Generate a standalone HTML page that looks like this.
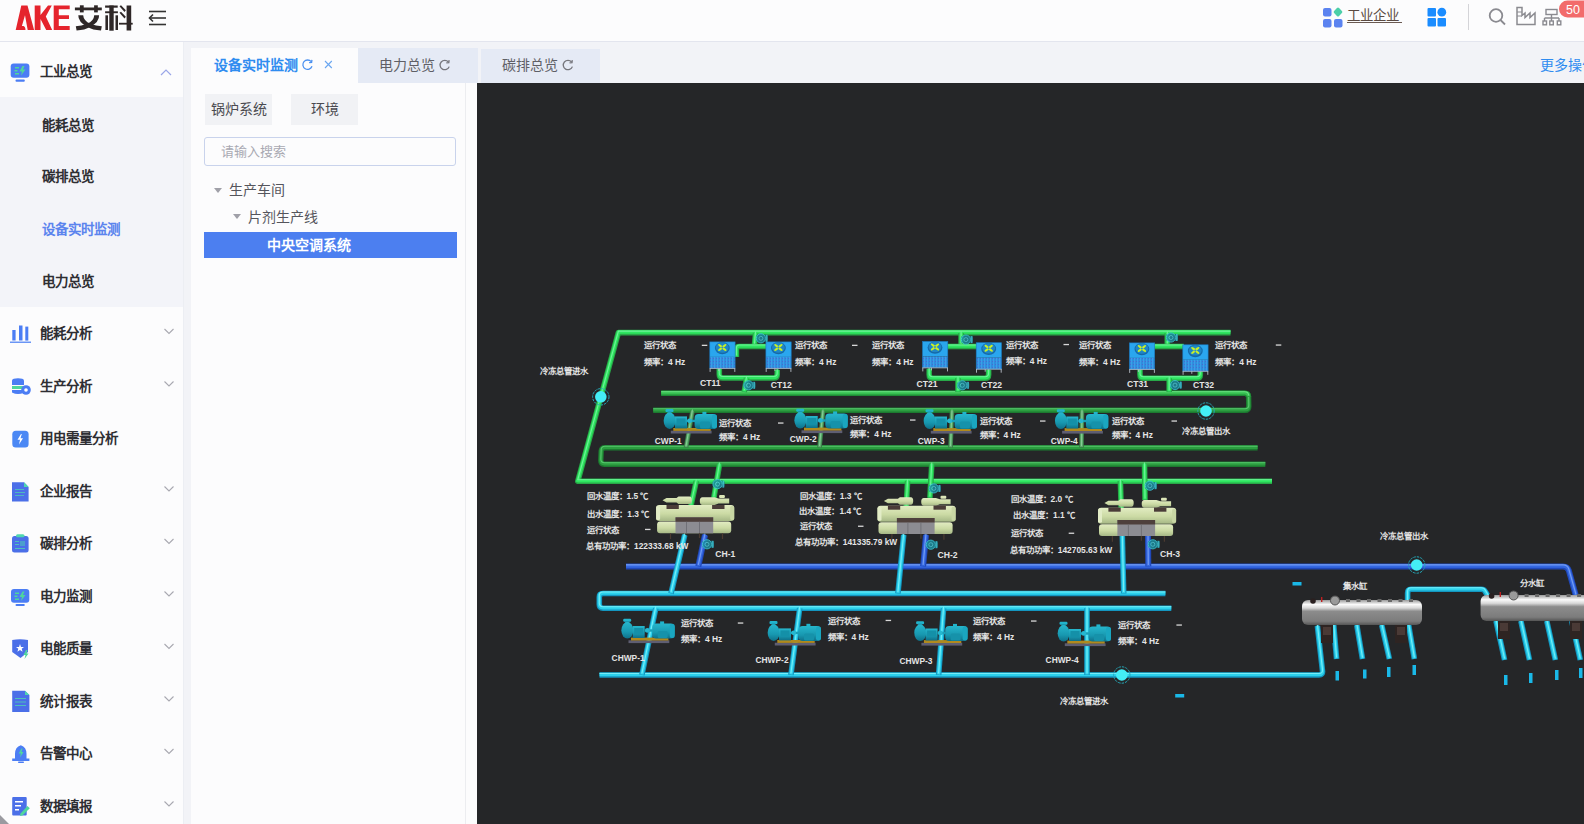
<!DOCTYPE html>
<html lang="zh-CN"><head><meta charset="utf-8">
<style>
*{box-sizing:border-box;margin:0;padding:0}
html,body{width:1584px;height:824px;overflow:hidden;background:#f2f3f7;font-family:"Liberation Sans",sans-serif}
.a{position:absolute}
#hdr{left:0;top:0;width:1584px;height:42px;background:#fcfcfd;border-bottom:1px solid #e3e5ee}
#side{left:0;top:42px;width:183px;height:782px;background:#fcfcfd}
#sub{left:0;top:97px;width:183px;height:210px;background:#f3f4f9}
.mi{position:absolute;left:40px;font-size:13.5px;font-weight:bold;color:#2e2e33;line-height:16px;white-space:nowrap}
.si{position:absolute;left:41.5px;font-size:13.5px;font-weight:bold;color:#2e2e33;line-height:16px;white-space:nowrap}
.chev{position:absolute;left:164px;width:7px;height:7px;border-right:1.2px solid #a8a8b0;border-bottom:1.2px solid #a8a8b0;transform:rotate(45deg)}
.ico{position:absolute;left:9px;width:24px;height:24px}
.tabt{position:absolute;font-size:14px;line-height:16px;color:#5f5f66;white-space:nowrap}
.btn{position:absolute;top:94px;height:31px;background:#f1f2f5;font-size:14px;line-height:31px;color:#4a4a50;text-align:center}
.tr{position:absolute;font-size:14px;line-height:16px;color:#55555c;white-space:nowrap}
.tri{position:absolute;width:0;height:0;border-left:4px solid transparent;border-right:4px solid transparent;border-top:5px solid #a0a0a8}
#canvas{left:477px;top:83px;width:1107px;height:741px;background:#252628}
svg text{font-family:"Liberation Sans",sans-serif}
</style></head><body>
<div id="hdr" class="a"></div>
<!-- logo -->
<svg class="a" style="left:0;top:0" width="180" height="42">
  <g fill="#e5242d">
    <path d="M15.7 30 L21.3 5.5 H27.5 L34.1 30 H27.7 L25 15.3 L21.9 26.1 H23.5 Q25.3 26.5 25.5 30 Z"/>
    <polygon points="34.7,5.5 40.5,5.5 40.5,15 48,5.5 51.8,5.5 45.8,16.6 52.2,30 46.2,30 40.5,19 40.5,30 34.7,30"/>
    <polygon points="53.7,5.5 69.7,5.5 69.7,9.3 58.8,9.3 58.8,15.3 69,15.3 69,19 58.8,19 58.8,26 69.7,26 69.7,30 53.7,30"/>
  </g>
  <g fill="#2e2727">
    <rect x="74.9" y="7.5" width="26.9" height="2.8"/>
    <rect x="79.9" y="5.3" width="3.8" height="7.1"/><rect x="94.1" y="5.3" width="3.7" height="7.1"/>
    <path d="M78.3 15.3 H83.2 Q83.5 21 90.5 23.8 Q96 26 101.8 26.3 L101 30.5 Q92.5 30 87.5 27 Q78 22 78.3 15.3Z"/>
    <path d="M99.1 15.3 H94.2 Q94 21 87 23.8 Q81.5 26 75.8 26.3 L76.6 30.5 Q85 30 90 27 Q99.5 22 99.1 15.3Z"/>
    <rect x="105.1" y="5.5" width="12.6" height="2.2"/>
    <rect x="105.1" y="11.3" width="12.8" height="1.9"/>
    <rect x="109.3" y="5.5" width="4.4" height="25.2"/>
    <rect x="105.4" y="15.3" width="2.6" height="14.7"/>
    <rect x="115.5" y="15.3" width="2.5" height="14.7"/>
    <polygon points="119.5,6.2 121,5.2 125.8,10.3 124.5,12"/>
    <polygon points="119.5,12.8 121,11.8 125.8,16.8 124.5,18.5"/>
    <rect x="119" y="22.8" width="13.7" height="1.8"/>
    <rect x="126.6" y="5.5" width="4.6" height="25"/>
  </g>
  <g stroke="#333" stroke-width="1.6" fill="none">
    <line x1="149" y1="11.5" x2="166" y2="11.5"/><line x1="149.5" y1="18" x2="166" y2="18"/><line x1="149" y1="24.5" x2="166" y2="24.5"/>
    <polyline points="153,14.5 149.5,18 153,21.5"/>
  </g>
</svg>
<!-- header right -->
<svg class="a" style="left:1300px;top:0" width="284" height="42">
  <rect x="23" y="8" width="8.5" height="8.5" rx="2" fill="#5b83f0"/>
  <rect x="23" y="19" width="8.5" height="8.5" rx="2" fill="#5b83f0"/>
  <rect x="34" y="19" width="8.5" height="8.5" rx="2" fill="#5b83f0"/>
  <rect x="34.5" y="8.5" width="7" height="7" rx="1.5" fill="#4ccfa8" transform="rotate(45 38 12)"/>
  <rect x="127.5" y="8" width="8.5" height="8.5" rx="1" fill="#1a8cff"/>
  <rect x="127.5" y="18" width="8.5" height="8.5" rx="1" fill="#1a8cff"/>
  <rect x="137.5" y="18" width="8.5" height="8.5" rx="1" fill="#1a8cff"/>
  <circle cx="141.8" cy="12.2" r="4.4" fill="#1a8cff"/>
  <line x1="168.5" y1="4" x2="168.5" y2="30" stroke="#d4d4d8" stroke-width="1"/>
  <circle cx="196" cy="15.5" r="6.3" fill="none" stroke="#8a8a90" stroke-width="1.8"/>
  <line x1="200.5" y1="20" x2="205" y2="24.5" stroke="#8a8a90" stroke-width="1.8"/>
  <path d="M217 7.5 V24.5 H235 V13 L230 17.5 V13 L225 17.5 V13 L222 15.5 V7.5 Z" fill="none" stroke="#8a8a90" stroke-width="1.5"/>
  <line x1="217" y1="12" x2="222" y2="12" stroke="#8a8a90" stroke-width="1"/>
  <line x1="217" y1="16" x2="222" y2="16" stroke="#8a8a90" stroke-width="1"/>
  <g fill="none" stroke="#8a8a90" stroke-width="1.4">
    <rect x="246" y="9.5" width="11" height="5"/>
    <path d="M251.5 14.5 V18 M244.5 18 H259 M244.5 18 V21 M251.5 18 V21 M259 18 V21"/>
    <rect x="243" y="21" width="3.5" height="3.8"/><rect x="249.8" y="21" width="3.5" height="3.8"/><rect x="257.3" y="21" width="3.5" height="3.8"/>
  </g>
  <rect x="259" y="0.5" width="32" height="17" rx="8.5" fill="#f26b6b"/>
  <text x="266" y="13.5" font-size="12.5" fill="#fff">50</text>
</svg>
<div class="a" style="left:1347px;top:9px;font-size:13.5px;line-height:14px;color:#5a4a42;white-space:nowrap;font-weight:300">工业企业</div><div class="a" style="left:1347px;top:22px;width:55px;height:1px;background:#6a5a52"></div>

<div id="side" class="a"></div>
<div id="sub" class="a"></div>
<div class="a" style="left:183px;top:42px;width:1px;height:782px;background:#eceef3"></div>
<!-- sidebar items -->
<div class="mi" style="top:64px">工业总览</div>
<div class="si" style="top:117.5px">能耗总览</div>
<div class="si" style="top:169px">碳排总览</div>
<div class="si" style="top:222px;color:#5b84ee">设备实时监测</div>
<div class="si" style="top:274px">电力总览</div>
<div class="mi" style="top:326px">能耗分析</div>
<div class="mi" style="top:378.5px">生产分析</div>
<div class="mi" style="top:431px">用电需量分析</div>
<div class="mi" style="top:483.5px">企业报告</div>
<div class="mi" style="top:536px">碳排分析</div>
<div class="mi" style="top:588.5px">电力监测</div>
<div class="mi" style="top:641px">电能质量</div>
<div class="mi" style="top:693.5px">统计报表</div>
<div class="mi" style="top:746px">告警中心</div>
<div class="mi" style="top:798.5px">数据填报</div>
<svg class="a" style="left:0;top:0" width="183" height="824">
  <g fill="none" stroke="#9aa6e8" stroke-width="1.2"><polyline points="161,75 166,70 171,75"/></g>
  <g fill="none" stroke="#a8a8b0" stroke-width="1.1">
    <polyline points="164.5,329 169,333.5 173.5,329"/>
    <polyline points="164.5,381.5 169,386 173.5,381.5"/>
    <polyline points="164.5,486.5 169,491 173.5,486.5"/>
    <polyline points="164.5,539 169,543.5 173.5,539"/>
    <polyline points="164.5,591.5 169,596 173.5,591.5"/>
    <polyline points="164.5,644 169,648.5 173.5,644"/>
    <polyline points="164.5,696.5 169,701 173.5,696.5"/>
    <polyline points="164.5,749 169,753.5 173.5,749"/>
    <polyline points="164.5,801.5 169,806 173.5,801.5"/>
  </g>
  <!-- icon 1 monitor -->
  <rect x="10.7" y="63.5" width="18.7" height="14.3" rx="3" fill="#4b7df4"/>
  <rect x="15.5" y="79.5" width="9.3" height="2.2" rx="1" fill="#4b7df4"/>
  <g fill="#4fd69c"><rect x="15" y="67" width="4" height="1.5"/><rect x="14.5" y="70" width="3" height="1.5"/><rect x="15" y="73" width="4" height="1.5"/>
  <polygon points="22.5,66 19.5,71.5 22,71.5 21,75.5 25.5,69.5 23,69.5 24.5,66"/></g>
  <!-- bar chart -->
  <g fill="#4b7df4"><rect x="12.3" y="330" width="3.3" height="10.5"/><rect x="19" y="325.5" width="3.5" height="15"/><rect x="25.3" y="326.6" width="3" height="14"/><rect x="10" y="341.5" width="21" height="1.5" fill="#6a95f5"/></g>
  <!-- db -->
  <g><ellipse cx="18" cy="380.5" rx="6" ry="2.3" fill="#4b7df4"/><rect x="12" y="381" width="12" height="4" fill="#4b7df4"/><rect x="12" y="386" width="12" height="3" fill="#4fd69c"/><path d="M12 390 H24 V392.5 Q18 395.5 12 392.5Z" fill="#4b7df4"/>
  <circle cx="26" cy="390" r="4.8" fill="#4b7df4"/><circle cx="26" cy="390" r="1.8" fill="#fff"/></g>
  <!-- lightning square -->
  <rect x="12.3" y="430.7" width="16.3" height="16.7" rx="3.5" fill="#4b88f4"/>
  <polygon points="21,434 17.5,439.8 20,439.8 19,444.5 23,438.3 20.5,438.3 21.8,434" fill="#fff"/>
  <!-- doc -->
  <path d="M12 482.3 H24 L28.6 487 V501.5 H12Z" fill="#4b6fe8"/><path d="M24 482.3 L28.6 487 H24Z" fill="#4fd6b0"/>
  <g fill="#4fd6b0" opacity="0.7"><rect x="15" y="489" width="9" height="1"/><rect x="15" y="492" width="10" height="1"/><rect x="15" y="495" width="9" height="1"/></g>
  <!-- clipboard -->
  <rect x="12" y="536" width="16.6" height="16.6" rx="2.5" fill="#4b6fe8"/><rect x="16" y="534.3" width="8.5" height="3" rx="1.5" fill="#4fd6b0"/>
  <g fill="#4fd6b0" opacity="0.8"><rect x="15" y="541" width="4" height="1"/><rect x="15" y="544" width="4" height="1"/><rect x="20" y="541" width="5" height="5" opacity="0.6"/><rect x="15" y="548" width="10" height="1"/></g>
  <!-- monitor 2 -->
  <rect x="11" y="589" width="18.3" height="13.8" rx="3" fill="#4b7df4"/>
  <rect x="15.5" y="604" width="9.3" height="2" rx="1" fill="#4b7df4"/>
  <g fill="#4fd69c"><rect x="15" y="592.5" width="4" height="1.5"/><rect x="14.5" y="595.5" width="3" height="1.5"/><rect x="15" y="598.5" width="4" height="1.5"/>
  <polygon points="22.5,591.5 19.5,597 22,597 21,601 25.5,595 23,595 24.5,591.5"/></g>
  <!-- shield -->
  <path d="M12.2 640 Q20 638.5 28 640 V652 L20.5 658 L12.2 652Z" fill="#4b6fe8"/>
  <polygon points="20,644 21,647 24,647 21.7,648.8 22.6,651.8 20,650 17.4,651.8 18.3,648.8 16,647 19,647" fill="#fff"/>
  <polygon points="26,650 23.5,655 25.5,655 24.5,659 28.5,653.5 26.5,653.5 27.5,650" fill="#4fd69c"/>
  <!-- doc 2 -->
  <path d="M12.2 690.7 H25 L29.4 695 V711.9 H12.2Z" fill="#4b6fe8"/><path d="M25 690.7 L29.4 695 H25Z" fill="#4fd6b0"/>
  <g fill="#4fd6b0" opacity="0.8"><rect x="15" y="698" width="11" height="1"/><rect x="15" y="701.5" width="11" height="1"/><rect x="15" y="705" width="11" height="1"/></g>
  <!-- bell -->
  <path d="M20.8 745.3 Q26.5 747 26.5 754 V758.5 H29.4 V761 H12.2 V758.5 H15 V754 Q15 747 20.8 745.3Z" fill="#4b7df4"/>
  <rect x="18" y="761.5" width="6" height="1.5" rx="0.7" fill="#4b7df4"/>
  <polygon points="21.5,748.5 18.7,753.5 20.8,753.5 20,757.5 23.5,752 21.5,752 22.5,748.5" fill="#4fd69c"/>
  <polygon points="0,815 0,824 9,824" fill="#9a9aa0"/>
  <!-- form -->
  <rect x="12.2" y="797" width="14.5" height="18.5" rx="1" fill="#4b6fe8"/>
  <g fill="#fff"><rect x="15" y="801" width="8" height="1.5"/><rect x="15" y="805" width="6" height="1.5"/><rect x="15" y="809" width="4" height="1.5"/></g>
  <polygon points="27.5,806 29.8,808.3 22.5,815.5 20,816 20.5,813.5" fill="#4fd69c"/>
</svg>
<!-- tabs -->
<div class="a" style="left:191px;top:47.5px;width:167px;height:36px;background:#fcfcfd"></div>
<div class="a" style="left:358px;top:48px;width:119.5px;height:34.5px;background:#e5eaf5"></div>
<div class="a" style="left:481px;top:48.5px;width:119px;height:34px;background:#e5eaf5"></div>
<div class="tabt" style="left:214px;top:57px;color:#2f8cf0;font-weight:bold">设备实时监测</div>
<div class="tabt" style="left:379px;top:57px">电力总览</div>
<div class="tabt" style="left:502px;top:57px">碳排总览</div>
<svg class="a" style="left:0;top:40px" width="620" height="44"><g fill="none" stroke-width="1.3"><path d="M311.20 21.70 A4.7 4.7 0 1 0 312.00 26.30" stroke="#4a90f0"/><polyline points="311.90,19.80 311.60,22.30 309.10,22.60" stroke="#4a90f0"/><path d="M448.40 22.00 A4.7 4.7 0 1 0 449.20 26.60" stroke="#76767c"/><polyline points="449.10,20.10 448.80,22.60 446.30,22.90" stroke="#76767c"/><path d="M571.60 22.00 A4.7 4.7 0 1 0 572.40 26.60" stroke="#76767c"/><polyline points="572.30,20.10 572.00,22.60 569.50,22.90" stroke="#76767c"/><path d="M325 21 L331.8 28 M331.8 21 L325 28" stroke="#6aa6f0" stroke-width="1.1"/></g></svg>
<div class="a" style="left:1540px;top:57px;font-size:14px;line-height:16px;color:#2f8cf0;white-space:nowrap">更多操作</div>
<!-- panel -->
<div class="a" style="left:191px;top:83px;width:286px;height:741px;background:#fcfcfd"></div>
<div class="a" style="left:465px;top:83px;width:1px;height:741px;background:#ecedf0"></div>
<div class="btn" style="left:205px;width:67px">锅炉系统</div>
<div class="btn" style="left:291px;width:67px">环境</div>
<div class="a" style="left:204px;top:137px;width:252px;height:29px;border:1px solid #c9d3ec;border-radius:3px;background:#fcfcfd"></div>
<div class="tr" style="left:221px;top:143.5px;color:#a9a9b2;font-size:13px">请输入搜索</div>
<div class="tri" style="left:214px;top:188px"></div>
<div class="tr" style="left:229px;top:182px">生产车间</div>
<div class="tri" style="left:233px;top:214px"></div>
<div class="tr" style="left:248px;top:208.5px">片剂生产线</div>
<div class="a" style="left:204px;top:232px;width:253px;height:26px;background:#4c7ff0"></div>
<div class="tr" style="left:267px;top:237px;color:#fff;font-weight:bold">中央空调系统</div>
<div id="canvas" class="a"></div>
<svg class="a" style="left:0;top:0" width="1584" height="824" viewBox="0 0 1584 824">
<defs>
<linearGradient id="ctTop" x1="0" y1="0" x2="0" y2="1"><stop offset="0" stop-color="#3cb4f4"/><stop offset="1" stop-color="#2892e0"/></linearGradient>
<pattern id="slat" width="3" height="3" patternUnits="userSpaceOnUse"><rect width="3" height="3" fill="#2e8ede"/><rect width="1" height="3" fill="#3c9ee8"/><rect x="2" y="1" width="1" height="1" fill="#4a6ad0"/></pattern>
<linearGradient id="cyl" x1="0" y1="0" x2="0" y2="1"><stop offset="0" stop-color="#9a9a9a"/><stop offset="0.18" stop-color="#fafafa"/><stop offset="0.32" stop-color="#d8d8d8"/><stop offset="0.45" stop-color="#8c8c8c"/><stop offset="0.85" stop-color="#7c7c7c"/><stop offset="1" stop-color="#555555"/></linearGradient>
<linearGradient id="chl" x1="0" y1="0" x2="0" y2="1"><stop offset="0" stop-color="#e2ecc2"/><stop offset="0.55" stop-color="#cbdaa4"/><stop offset="1" stop-color="#a6b886"/></linearGradient>
<linearGradient id="pmp" x1="0" y1="0" x2="0" y2="1"><stop offset="0" stop-color="#26b6cc"/><stop offset="0.6" stop-color="#1898b0"/><stop offset="1" stop-color="#0e7088"/></linearGradient>
</defs>
<path d="M1230.5 332.6 H618.4 L577.8 481.2 H1272" fill="none" stroke="#28a848" stroke-width="5.6" stroke-linejoin="round" stroke-linecap="butt"/>
<path d="M1230.5 332.6 H618.4 L577.8 481.2 H1272" fill="none" stroke="#2ee660" stroke-width="3.47" stroke-linejoin="round" stroke-linecap="butt" transform="translate(0,-0.5)"/>
<path d="M1230.5 332.6 H618.4 L577.8 481.2 H1272" fill="none" stroke="#80f4a8" stroke-width="1.12" stroke-linejoin="round" stroke-linecap="butt" transform="translate(0,-1.5)" opacity="0.8"/>
<path d="M661.2 393.2 H1244.5 Q1248.5 393.2 1248.6 397 L1248.8 406.5 Q1248.8 410.3 1245 410.3 H653.2" fill="none" stroke="#1c7a30" stroke-width="5.4" stroke-linejoin="round" stroke-linecap="butt"/>
<path d="M661.2 393.2 H1244.5 Q1248.5 393.2 1248.6 397 L1248.8 406.5 Q1248.8 410.3 1245 410.3 H653.2" fill="none" stroke="#2c9e40" stroke-width="3.35" stroke-linejoin="round" stroke-linecap="butt" transform="translate(0,-0.5)"/>
<path d="M661.2 393.2 H1244.5 Q1248.5 393.2 1248.6 397 L1248.8 406.5 Q1248.8 410.3 1245 410.3 H653.2" fill="none" stroke="#60d078" stroke-width="1.08" stroke-linejoin="round" stroke-linecap="butt" transform="translate(0,-1.5)" opacity="0.8"/>
<path d="M661.2 393.2 H1244.5 Q1248.5 393.2 1248.6 397" fill="none" stroke="#1f8a36" stroke-width="5.4" stroke-linejoin="round" stroke-linecap="butt"/>
<path d="M661.2 393.2 H1244.5 Q1248.5 393.2 1248.6 397" fill="none" stroke="#36c050" stroke-width="3.35" stroke-linejoin="round" stroke-linecap="butt" transform="translate(0,-0.5)"/>
<path d="M661.2 393.2 H1244.5 Q1248.5 393.2 1248.6 397" fill="none" stroke="#78e890" stroke-width="1.08" stroke-linejoin="round" stroke-linecap="butt" transform="translate(0,-1.5)" opacity="0.8"/>
<path d="M1257.6 447.8 H605 Q601.5 447.8 601.2 451 L600.8 460.5 Q600.8 464.2 604.5 464.2 H1265.3" fill="none" stroke="#1c7a30" stroke-width="5.4" stroke-linejoin="round" stroke-linecap="butt"/>
<path d="M1257.6 447.8 H605 Q601.5 447.8 601.2 451 L600.8 460.5 Q600.8 464.2 604.5 464.2 H1265.3" fill="none" stroke="#2c9e40" stroke-width="3.35" stroke-linejoin="round" stroke-linecap="butt" transform="translate(0,-0.5)"/>
<path d="M1257.6 447.8 H605 Q601.5 447.8 601.2 451 L600.8 460.5 Q600.8 464.2 604.5 464.2 H1265.3" fill="none" stroke="#60d078" stroke-width="1.08" stroke-linejoin="round" stroke-linecap="butt" transform="translate(0,-1.5)" opacity="0.8"/>
<path d="M754.3 347 L755.6 333" fill="none" stroke="#28a848" stroke-width="5.6" stroke-linejoin="round" stroke-linecap="butt"/>
<path d="M754.3 347 L755.6 333" fill="none" stroke="#2ee660" stroke-width="3.47" stroke-linejoin="round" stroke-linecap="butt" transform="translate(0,-0.5)"/>
<path d="M754.3 347 L755.6 333" fill="none" stroke="#80f4a8" stroke-width="1.12" stroke-linejoin="round" stroke-linecap="butt" transform="translate(0,-1.5)" opacity="0.8"/>
<path d="M736.4 357 V349.5 Q736.4 346.5 739.4 346.5 H766.9" fill="none" stroke="#28a848" stroke-width="5.6" stroke-linejoin="round" stroke-linecap="butt"/>
<path d="M736.4 357 V349.5 Q736.4 346.5 739.4 346.5 H766.9" fill="none" stroke="#2ee660" stroke-width="3.47" stroke-linejoin="round" stroke-linecap="butt" transform="translate(0,-0.5)"/>
<path d="M736.4 357 V349.5 Q736.4 346.5 739.4 346.5 H766.9" fill="none" stroke="#80f4a8" stroke-width="1.12" stroke-linejoin="round" stroke-linecap="butt" transform="translate(0,-1.5)" opacity="0.8"/>
<path d="M719.3 369 V374.5 Q719.3 378 722.8 378 H773.7 Q777.2 378 777.2 374.5 V370" fill="none" stroke="#28a848" stroke-width="5.6" stroke-linejoin="round" stroke-linecap="butt"/>
<path d="M719.3 369 V374.5 Q719.3 378 722.8 378 H773.7 Q777.2 378 777.2 374.5 V370" fill="none" stroke="#2ee660" stroke-width="3.47" stroke-linejoin="round" stroke-linecap="butt" transform="translate(0,-0.5)"/>
<path d="M719.3 369 V374.5 Q719.3 378 722.8 378 H773.7 Q777.2 378 777.2 374.5 V370" fill="none" stroke="#80f4a8" stroke-width="1.12" stroke-linejoin="round" stroke-linecap="butt" transform="translate(0,-1.5)" opacity="0.8"/>
<path d="M746.6 378 L744.2 392" fill="none" stroke="#28a848" stroke-width="5.6" stroke-linejoin="round" stroke-linecap="butt"/>
<path d="M746.6 378 L744.2 392" fill="none" stroke="#2ee660" stroke-width="3.47" stroke-linejoin="round" stroke-linecap="butt" transform="translate(0,-0.5)"/>
<path d="M746.6 378 L744.2 392" fill="none" stroke="#80f4a8" stroke-width="1.12" stroke-linejoin="round" stroke-linecap="butt" transform="translate(0,-1.5)" opacity="0.8"/>
<path d="M961.1 347 L961.1 333" fill="none" stroke="#28a848" stroke-width="5.6" stroke-linejoin="round" stroke-linecap="butt"/>
<path d="M961.1 347 L961.1 333" fill="none" stroke="#2ee660" stroke-width="3.47" stroke-linejoin="round" stroke-linecap="butt" transform="translate(0,-0.5)"/>
<path d="M961.1 347 L961.1 333" fill="none" stroke="#80f4a8" stroke-width="1.12" stroke-linejoin="round" stroke-linecap="butt" transform="translate(0,-1.5)" opacity="0.8"/>
<path d="M946.5 346.5 H977.2" fill="none" stroke="#28a848" stroke-width="5.6" stroke-linejoin="round" stroke-linecap="butt"/>
<path d="M946.5 346.5 H977.2" fill="none" stroke="#2ee660" stroke-width="3.47" stroke-linejoin="round" stroke-linecap="butt" transform="translate(0,-0.5)"/>
<path d="M946.5 346.5 H977.2" fill="none" stroke="#80f4a8" stroke-width="1.12" stroke-linejoin="round" stroke-linecap="butt" transform="translate(0,-1.5)" opacity="0.8"/>
<path d="M929.2 369 V374.7 Q929.2 378.2 932.7 378.2 H985.1 Q988.6 378.2 988.6 374.7 V370" fill="none" stroke="#28a848" stroke-width="5.6" stroke-linejoin="round" stroke-linecap="butt"/>
<path d="M929.2 369 V374.7 Q929.2 378.2 932.7 378.2 H985.1 Q988.6 378.2 988.6 374.7 V370" fill="none" stroke="#2ee660" stroke-width="3.47" stroke-linejoin="round" stroke-linecap="butt" transform="translate(0,-0.5)"/>
<path d="M929.2 369 V374.7 Q929.2 378.2 932.7 378.2 H985.1 Q988.6 378.2 988.6 374.7 V370" fill="none" stroke="#80f4a8" stroke-width="1.12" stroke-linejoin="round" stroke-linecap="butt" transform="translate(0,-1.5)" opacity="0.8"/>
<path d="M958 378.2 L958 392" fill="none" stroke="#28a848" stroke-width="5.6" stroke-linejoin="round" stroke-linecap="butt"/>
<path d="M958 378.2 L958 392" fill="none" stroke="#2ee660" stroke-width="3.47" stroke-linejoin="round" stroke-linecap="butt" transform="translate(0,-0.5)"/>
<path d="M958 378.2 L958 392" fill="none" stroke="#80f4a8" stroke-width="1.12" stroke-linejoin="round" stroke-linecap="butt" transform="translate(0,-1.5)" opacity="0.8"/>
<path d="M1167.3 347 L1167.3 333" fill="none" stroke="#28a848" stroke-width="5.6" stroke-linejoin="round" stroke-linecap="butt"/>
<path d="M1167.3 347 L1167.3 333" fill="none" stroke="#2ee660" stroke-width="3.47" stroke-linejoin="round" stroke-linecap="butt" transform="translate(0,-0.5)"/>
<path d="M1167.3 347 L1167.3 333" fill="none" stroke="#80f4a8" stroke-width="1.12" stroke-linejoin="round" stroke-linecap="butt" transform="translate(0,-1.5)" opacity="0.8"/>
<path d="M1153.4 346.5 H1183.8" fill="none" stroke="#28a848" stroke-width="5.6" stroke-linejoin="round" stroke-linecap="butt"/>
<path d="M1153.4 346.5 H1183.8" fill="none" stroke="#2ee660" stroke-width="3.47" stroke-linejoin="round" stroke-linecap="butt" transform="translate(0,-0.5)"/>
<path d="M1153.4 346.5 H1183.8" fill="none" stroke="#80f4a8" stroke-width="1.12" stroke-linejoin="round" stroke-linecap="butt" transform="translate(0,-1.5)" opacity="0.8"/>
<path d="M1140 369 V374.8 Q1140 378.3 1143.5 378.3 H1196.8 Q1200.3 378.3 1200.3 374.8 V370" fill="none" stroke="#28a848" stroke-width="5.6" stroke-linejoin="round" stroke-linecap="butt"/>
<path d="M1140 369 V374.8 Q1140 378.3 1143.5 378.3 H1196.8 Q1200.3 378.3 1200.3 374.8 V370" fill="none" stroke="#2ee660" stroke-width="3.47" stroke-linejoin="round" stroke-linecap="butt" transform="translate(0,-0.5)"/>
<path d="M1140 369 V374.8 Q1140 378.3 1143.5 378.3 H1196.8 Q1200.3 378.3 1200.3 374.8 V370" fill="none" stroke="#80f4a8" stroke-width="1.12" stroke-linejoin="round" stroke-linecap="butt" transform="translate(0,-1.5)" opacity="0.8"/>
<path d="M1169.2 378.3 L1169.2 392" fill="none" stroke="#28a848" stroke-width="5.6" stroke-linejoin="round" stroke-linecap="butt"/>
<path d="M1169.2 378.3 L1169.2 392" fill="none" stroke="#2ee660" stroke-width="3.47" stroke-linejoin="round" stroke-linecap="butt" transform="translate(0,-0.5)"/>
<path d="M1169.2 378.3 L1169.2 392" fill="none" stroke="#80f4a8" stroke-width="1.12" stroke-linejoin="round" stroke-linecap="butt" transform="translate(0,-1.5)" opacity="0.8"/>
<path d="M692.5 411 L686 447.6" fill="none" stroke="#3a7a48" stroke-width="4.6" stroke-linejoin="round" stroke-linecap="butt"/>
<path d="M692.5 411 L686 447.6" fill="none" stroke="#5aae6a" stroke-width="2.85" stroke-linejoin="round" stroke-linecap="butt" transform="translate(0,-0.5)"/>
<path d="M692.5 411 L686 447.6" fill="none" stroke="#98d8a8" stroke-width="0.92" stroke-linejoin="round" stroke-linecap="butt" transform="translate(0,-1.5)" opacity="0.8"/>
<path d="M823 411 L819.5 447.6" fill="none" stroke="#3a7a48" stroke-width="4.6" stroke-linejoin="round" stroke-linecap="butt"/>
<path d="M823 411 L819.5 447.6" fill="none" stroke="#5aae6a" stroke-width="2.85" stroke-linejoin="round" stroke-linecap="butt" transform="translate(0,-0.5)"/>
<path d="M823 411 L819.5 447.6" fill="none" stroke="#98d8a8" stroke-width="0.92" stroke-linejoin="round" stroke-linecap="butt" transform="translate(0,-1.5)" opacity="0.8"/>
<path d="M952 411 L950.5 447.6" fill="none" stroke="#3a7a48" stroke-width="4.6" stroke-linejoin="round" stroke-linecap="butt"/>
<path d="M952 411 L950.5 447.6" fill="none" stroke="#5aae6a" stroke-width="2.85" stroke-linejoin="round" stroke-linecap="butt" transform="translate(0,-0.5)"/>
<path d="M952 411 L950.5 447.6" fill="none" stroke="#98d8a8" stroke-width="0.92" stroke-linejoin="round" stroke-linecap="butt" transform="translate(0,-1.5)" opacity="0.8"/>
<path d="M1082 411 L1081.5 447.6" fill="none" stroke="#3a7a48" stroke-width="4.6" stroke-linejoin="round" stroke-linecap="butt"/>
<path d="M1082 411 L1081.5 447.6" fill="none" stroke="#5aae6a" stroke-width="2.85" stroke-linejoin="round" stroke-linecap="butt" transform="translate(0,-0.5)"/>
<path d="M1082 411 L1081.5 447.6" fill="none" stroke="#98d8a8" stroke-width="0.92" stroke-linejoin="round" stroke-linecap="butt" transform="translate(0,-1.5)" opacity="0.8"/>
<path d="M719.6 464 L713.8 498" fill="none" stroke="#28a848" stroke-width="5.6" stroke-linejoin="round" stroke-linecap="butt"/>
<path d="M719.6 464 L713.8 498" fill="none" stroke="#2ee660" stroke-width="3.47" stroke-linejoin="round" stroke-linecap="butt" transform="translate(0,-0.5)"/>
<path d="M719.6 464 L713.8 498" fill="none" stroke="#80f4a8" stroke-width="1.12" stroke-linejoin="round" stroke-linecap="butt" transform="translate(0,-1.5)" opacity="0.8"/>
<path d="M696.3 481 L690.9 506" fill="none" stroke="#28a848" stroke-width="5.6" stroke-linejoin="round" stroke-linecap="butt"/>
<path d="M696.3 481 L690.9 506" fill="none" stroke="#2ee660" stroke-width="3.47" stroke-linejoin="round" stroke-linecap="butt" transform="translate(0,-0.5)"/>
<path d="M696.3 481 L690.9 506" fill="none" stroke="#80f4a8" stroke-width="1.12" stroke-linejoin="round" stroke-linecap="butt" transform="translate(0,-1.5)" opacity="0.8"/>
<path d="M931.8 464 L929.9 498" fill="none" stroke="#28a848" stroke-width="5.6" stroke-linejoin="round" stroke-linecap="butt"/>
<path d="M931.8 464 L929.9 498" fill="none" stroke="#2ee660" stroke-width="3.47" stroke-linejoin="round" stroke-linecap="butt" transform="translate(0,-0.5)"/>
<path d="M931.8 464 L929.9 498" fill="none" stroke="#80f4a8" stroke-width="1.12" stroke-linejoin="round" stroke-linecap="butt" transform="translate(0,-1.5)" opacity="0.8"/>
<path d="M907.6 481 L906.2 507" fill="none" stroke="#28a848" stroke-width="5.6" stroke-linejoin="round" stroke-linecap="butt"/>
<path d="M907.6 481 L906.2 507" fill="none" stroke="#2ee660" stroke-width="3.47" stroke-linejoin="round" stroke-linecap="butt" transform="translate(0,-0.5)"/>
<path d="M907.6 481 L906.2 507" fill="none" stroke="#80f4a8" stroke-width="1.12" stroke-linejoin="round" stroke-linecap="butt" transform="translate(0,-1.5)" opacity="0.8"/>
<path d="M1144.5 464 L1145 500" fill="none" stroke="#28a848" stroke-width="5.6" stroke-linejoin="round" stroke-linecap="butt"/>
<path d="M1144.5 464 L1145 500" fill="none" stroke="#2ee660" stroke-width="3.47" stroke-linejoin="round" stroke-linecap="butt" transform="translate(0,-0.5)"/>
<path d="M1144.5 464 L1145 500" fill="none" stroke="#80f4a8" stroke-width="1.12" stroke-linejoin="round" stroke-linecap="butt" transform="translate(0,-1.5)" opacity="0.8"/>
<path d="M1120.4 481 L1121.2 509" fill="none" stroke="#28a848" stroke-width="5.6" stroke-linejoin="round" stroke-linecap="butt"/>
<path d="M1120.4 481 L1121.2 509" fill="none" stroke="#2ee660" stroke-width="3.47" stroke-linejoin="round" stroke-linecap="butt" transform="translate(0,-0.5)"/>
<path d="M1120.4 481 L1121.2 509" fill="none" stroke="#80f4a8" stroke-width="1.12" stroke-linejoin="round" stroke-linecap="butt" transform="translate(0,-1.5)" opacity="0.8"/>
<path d="M626 566.4 H1563 Q1567.5 566.4 1568.8 570.5 L1576 596" fill="none" stroke="#2048b8" stroke-width="6.0" stroke-linejoin="round" stroke-linecap="butt"/>
<path d="M626 566.4 H1563 Q1567.5 566.4 1568.8 570.5 L1576 596" fill="none" stroke="#3468e2" stroke-width="3.72" stroke-linejoin="round" stroke-linecap="butt" transform="translate(0,-0.5)"/>
<path d="M626 566.4 H1563 Q1567.5 566.4 1568.8 570.5 L1576 596" fill="none" stroke="#82a8f6" stroke-width="1.20" stroke-linejoin="round" stroke-linecap="butt" transform="translate(0,-1.5)" opacity="0.8"/>
<path d="M1165.4 593.5 H603 Q599.3 593.5 599.3 597 V604.5 Q599.3 608.2 603 608.2 H1171.3" fill="none" stroke="#1496c0" stroke-width="5.6" stroke-linejoin="round" stroke-linecap="butt"/>
<path d="M1165.4 593.5 H603 Q599.3 593.5 599.3 597 V604.5 Q599.3 608.2 603 608.2 H1171.3" fill="none" stroke="#2cd2ec" stroke-width="3.47" stroke-linejoin="round" stroke-linecap="butt" transform="translate(0,-0.5)"/>
<path d="M1165.4 593.5 H603 Q599.3 593.5 599.3 597 V604.5 Q599.3 608.2 603 608.2 H1171.3" fill="none" stroke="#8af2fa" stroke-width="1.12" stroke-linejoin="round" stroke-linecap="butt" transform="translate(0,-1.5)" opacity="0.8"/>
<path d="M599.5 675 H1319 Q1323 675 1322.5 671 L1317.4 626" fill="none" stroke="#1496c0" stroke-width="5.6" stroke-linejoin="round" stroke-linecap="butt"/>
<path d="M599.5 675 H1319 Q1323 675 1322.5 671 L1317.4 626" fill="none" stroke="#2cd2ec" stroke-width="3.47" stroke-linejoin="round" stroke-linecap="butt" transform="translate(0,-0.5)"/>
<path d="M599.5 675 H1319 Q1323 675 1322.5 671 L1317.4 626" fill="none" stroke="#8af2fa" stroke-width="1.12" stroke-linejoin="round" stroke-linecap="butt" transform="translate(0,-1.5)" opacity="0.8"/>
<path d="M684.7 535 L671 593.5" fill="none" stroke="#1496c0" stroke-width="5.6" stroke-linejoin="round" stroke-linecap="butt"/>
<path d="M684.7 535 L671 593.5" fill="none" stroke="#2cd2ec" stroke-width="3.47" stroke-linejoin="round" stroke-linecap="butt" transform="translate(0,-0.5)"/>
<path d="M684.7 535 L671 593.5" fill="none" stroke="#8af2fa" stroke-width="1.12" stroke-linejoin="round" stroke-linecap="butt" transform="translate(0,-1.5)" opacity="0.8"/>
<path d="M705 535 L698.3 566.4" fill="none" stroke="#2048b8" stroke-width="6.0" stroke-linejoin="round" stroke-linecap="butt"/>
<path d="M705 535 L698.3 566.4" fill="none" stroke="#3468e2" stroke-width="3.72" stroke-linejoin="round" stroke-linecap="butt" transform="translate(0,-0.5)"/>
<path d="M705 535 L698.3 566.4" fill="none" stroke="#82a8f6" stroke-width="1.20" stroke-linejoin="round" stroke-linecap="butt" transform="translate(0,-1.5)" opacity="0.8"/>
<path d="M903.7 535 L897.9 593.5" fill="none" stroke="#1496c0" stroke-width="5.6" stroke-linejoin="round" stroke-linecap="butt"/>
<path d="M903.7 535 L897.9 593.5" fill="none" stroke="#2cd2ec" stroke-width="3.47" stroke-linejoin="round" stroke-linecap="butt" transform="translate(0,-0.5)"/>
<path d="M903.7 535 L897.9 593.5" fill="none" stroke="#8af2fa" stroke-width="1.12" stroke-linejoin="round" stroke-linecap="butt" transform="translate(0,-1.5)" opacity="0.8"/>
<path d="M926 535 L923.1 566.4" fill="none" stroke="#2048b8" stroke-width="6.0" stroke-linejoin="round" stroke-linecap="butt"/>
<path d="M926 535 L923.1 566.4" fill="none" stroke="#3468e2" stroke-width="3.72" stroke-linejoin="round" stroke-linecap="butt" transform="translate(0,-0.5)"/>
<path d="M926 535 L923.1 566.4" fill="none" stroke="#82a8f6" stroke-width="1.20" stroke-linejoin="round" stroke-linecap="butt" transform="translate(0,-1.5)" opacity="0.8"/>
<path d="M1122.3 535 L1123.7 593.5" fill="none" stroke="#1496c0" stroke-width="5.6" stroke-linejoin="round" stroke-linecap="butt"/>
<path d="M1122.3 535 L1123.7 593.5" fill="none" stroke="#2cd2ec" stroke-width="3.47" stroke-linejoin="round" stroke-linecap="butt" transform="translate(0,-0.5)"/>
<path d="M1122.3 535 L1123.7 593.5" fill="none" stroke="#8af2fa" stroke-width="1.12" stroke-linejoin="round" stroke-linecap="butt" transform="translate(0,-1.5)" opacity="0.8"/>
<path d="M1148 535 L1148.3 566.4" fill="none" stroke="#2048b8" stroke-width="6.0" stroke-linejoin="round" stroke-linecap="butt"/>
<path d="M1148 535 L1148.3 566.4" fill="none" stroke="#3468e2" stroke-width="3.72" stroke-linejoin="round" stroke-linecap="butt" transform="translate(0,-0.5)"/>
<path d="M1148 535 L1148.3 566.4" fill="none" stroke="#82a8f6" stroke-width="1.20" stroke-linejoin="round" stroke-linecap="butt" transform="translate(0,-1.5)" opacity="0.8"/>
<path d="M655.8 608.2 L641.9 675" fill="none" stroke="#1496c0" stroke-width="5.6" stroke-linejoin="round" stroke-linecap="butt"/>
<path d="M655.8 608.2 L641.9 675" fill="none" stroke="#2cd2ec" stroke-width="3.47" stroke-linejoin="round" stroke-linecap="butt" transform="translate(0,-0.5)"/>
<path d="M655.8 608.2 L641.9 675" fill="none" stroke="#8af2fa" stroke-width="1.12" stroke-linejoin="round" stroke-linecap="butt" transform="translate(0,-1.5)" opacity="0.8"/>
<path d="M799.7 608.2 L790.9 675" fill="none" stroke="#1496c0" stroke-width="5.6" stroke-linejoin="round" stroke-linecap="butt"/>
<path d="M799.7 608.2 L790.9 675" fill="none" stroke="#2cd2ec" stroke-width="3.47" stroke-linejoin="round" stroke-linecap="butt" transform="translate(0,-0.5)"/>
<path d="M799.7 608.2 L790.9 675" fill="none" stroke="#8af2fa" stroke-width="1.12" stroke-linejoin="round" stroke-linecap="butt" transform="translate(0,-1.5)" opacity="0.8"/>
<path d="M943.6 608.2 L938.6 675" fill="none" stroke="#1496c0" stroke-width="5.6" stroke-linejoin="round" stroke-linecap="butt"/>
<path d="M943.6 608.2 L938.6 675" fill="none" stroke="#2cd2ec" stroke-width="3.47" stroke-linejoin="round" stroke-linecap="butt" transform="translate(0,-0.5)"/>
<path d="M943.6 608.2 L938.6 675" fill="none" stroke="#8af2fa" stroke-width="1.12" stroke-linejoin="round" stroke-linecap="butt" transform="translate(0,-1.5)" opacity="0.8"/>
<path d="M1087 608.2 L1087 675" fill="none" stroke="#1496c0" stroke-width="5.6" stroke-linejoin="round" stroke-linecap="butt"/>
<path d="M1087 608.2 L1087 675" fill="none" stroke="#2cd2ec" stroke-width="3.47" stroke-linejoin="round" stroke-linecap="butt" transform="translate(0,-0.5)"/>
<path d="M1087 608.2 L1087 675" fill="none" stroke="#8af2fa" stroke-width="1.12" stroke-linejoin="round" stroke-linecap="butt" transform="translate(0,-1.5)" opacity="0.8"/>
<path d="M1407.6 602 V593 Q1407.6 589.3 1411 589.3 H1481 Q1484.4 589.3 1485.5 592 L1489 598" fill="none" stroke="#1496c0" stroke-width="5.6" stroke-linejoin="round" stroke-linecap="butt"/>
<path d="M1407.6 602 V593 Q1407.6 589.3 1411 589.3 H1481 Q1484.4 589.3 1485.5 592 L1489 598" fill="none" stroke="#2cd2ec" stroke-width="3.47" stroke-linejoin="round" stroke-linecap="butt" transform="translate(0,-0.5)"/>
<path d="M1407.6 602 V593 Q1407.6 589.3 1411 589.3 H1481 Q1484.4 589.3 1485.5 592 L1489 598" fill="none" stroke="#8af2fa" stroke-width="1.12" stroke-linejoin="round" stroke-linecap="butt" transform="translate(0,-1.5)" opacity="0.8"/>
<path d="M1333.7 625 L1336.6 659" fill="none" stroke="#1496c0" stroke-width="5.6" stroke-linejoin="round" stroke-linecap="butt"/>
<path d="M1333.7 625 L1336.6 659" fill="none" stroke="#2cd2ec" stroke-width="3.47" stroke-linejoin="round" stroke-linecap="butt" transform="translate(0,-0.5)"/>
<path d="M1333.7 625 L1336.6 659" fill="none" stroke="#8af2fa" stroke-width="1.12" stroke-linejoin="round" stroke-linecap="butt" transform="translate(0,-1.5)" opacity="0.8"/>
<path d="M1356.8 625 L1362.5 659" fill="none" stroke="#1496c0" stroke-width="5.6" stroke-linejoin="round" stroke-linecap="butt"/>
<path d="M1356.8 625 L1362.5 659" fill="none" stroke="#2cd2ec" stroke-width="3.47" stroke-linejoin="round" stroke-linecap="butt" transform="translate(0,-0.5)"/>
<path d="M1356.8 625 L1362.5 659" fill="none" stroke="#8af2fa" stroke-width="1.12" stroke-linejoin="round" stroke-linecap="butt" transform="translate(0,-1.5)" opacity="0.8"/>
<path d="M1381.7 625 L1389.4 659" fill="none" stroke="#1496c0" stroke-width="5.6" stroke-linejoin="round" stroke-linecap="butt"/>
<path d="M1381.7 625 L1389.4 659" fill="none" stroke="#2cd2ec" stroke-width="3.47" stroke-linejoin="round" stroke-linecap="butt" transform="translate(0,-0.5)"/>
<path d="M1381.7 625 L1389.4 659" fill="none" stroke="#8af2fa" stroke-width="1.12" stroke-linejoin="round" stroke-linecap="butt" transform="translate(0,-1.5)" opacity="0.8"/>
<path d="M1408.6 625 L1414.4 659" fill="none" stroke="#1496c0" stroke-width="5.6" stroke-linejoin="round" stroke-linecap="butt"/>
<path d="M1408.6 625 L1414.4 659" fill="none" stroke="#2cd2ec" stroke-width="3.47" stroke-linejoin="round" stroke-linecap="butt" transform="translate(0,-0.5)"/>
<path d="M1408.6 625 L1414.4 659" fill="none" stroke="#8af2fa" stroke-width="1.12" stroke-linejoin="round" stroke-linecap="butt" transform="translate(0,-1.5)" opacity="0.8"/>
<path d="M1496 621 L1504.6 660" fill="none" stroke="#1496c0" stroke-width="5.6" stroke-linejoin="round" stroke-linecap="butt"/>
<path d="M1496 621 L1504.6 660" fill="none" stroke="#2cd2ec" stroke-width="3.47" stroke-linejoin="round" stroke-linecap="butt" transform="translate(0,-0.5)"/>
<path d="M1496 621 L1504.6 660" fill="none" stroke="#8af2fa" stroke-width="1.12" stroke-linejoin="round" stroke-linecap="butt" transform="translate(0,-1.5)" opacity="0.8"/>
<path d="M1520.9 621 L1529.5 660" fill="none" stroke="#1496c0" stroke-width="5.6" stroke-linejoin="round" stroke-linecap="butt"/>
<path d="M1520.9 621 L1529.5 660" fill="none" stroke="#2cd2ec" stroke-width="3.47" stroke-linejoin="round" stroke-linecap="butt" transform="translate(0,-0.5)"/>
<path d="M1520.9 621 L1529.5 660" fill="none" stroke="#8af2fa" stroke-width="1.12" stroke-linejoin="round" stroke-linecap="butt" transform="translate(0,-1.5)" opacity="0.8"/>
<path d="M1546.8 621 L1555.4 660" fill="none" stroke="#1496c0" stroke-width="5.6" stroke-linejoin="round" stroke-linecap="butt"/>
<path d="M1546.8 621 L1555.4 660" fill="none" stroke="#2cd2ec" stroke-width="3.47" stroke-linejoin="round" stroke-linecap="butt" transform="translate(0,-0.5)"/>
<path d="M1546.8 621 L1555.4 660" fill="none" stroke="#8af2fa" stroke-width="1.12" stroke-linejoin="round" stroke-linecap="butt" transform="translate(0,-1.5)" opacity="0.8"/>
<path d="M1571.7 621 L1580.3 660" fill="none" stroke="#1496c0" stroke-width="5.6" stroke-linejoin="round" stroke-linecap="butt"/>
<path d="M1571.7 621 L1580.3 660" fill="none" stroke="#2cd2ec" stroke-width="3.47" stroke-linejoin="round" stroke-linecap="butt" transform="translate(0,-0.5)"/>
<path d="M1571.7 621 L1580.3 660" fill="none" stroke="#8af2fa" stroke-width="1.12" stroke-linejoin="round" stroke-linecap="butt" transform="translate(0,-1.5)" opacity="0.8"/>
<g><rect x="709.8" y="341.9" width="25.3" height="15" fill="#2aa6ee"/><rect x="709.8" y="356.9" width="25.3" height="11.3" fill="url(#slat)"/><rect x="709.8" y="341.9" width="25.3" height="26.3" fill="none" stroke="#1a78c0" stroke-width="0.6"/><ellipse cx="722.3" cy="348.1" rx="7.4" ry="6.2" fill="#1668a8"/><ellipse cx="722.3" cy="347.5" rx="6.4" ry="5.2" fill="#1f86c6"/><ellipse cx="724.25" cy="345.85" rx="2.6" ry="1.1" fill="#c8f028" transform="rotate(-35 724.25 345.85)"/><ellipse cx="720.35" cy="345.85" rx="2.6" ry="1.1" fill="#c8f028" transform="rotate(35 720.35 345.85)"/><ellipse cx="724.25" cy="349.15" rx="2.6" ry="1.1" fill="#c8f028" transform="rotate(35 724.25 349.15)"/><ellipse cx="720.35" cy="349.15" rx="2.6" ry="1.1" fill="#c8f028" transform="rotate(-35 720.35 349.15)"/><circle cx="722.3" cy="347.5" r="1" fill="#2a90d0"/><path d="M710.0999999999999 368.2 V371.9 M718.8 368.2 V370.9 M734.8 368.2 V371.9" stroke="#b8c0c8" stroke-width="0.9"/><rect x="709.8" y="367.9" width="25.3" height="0.9" fill="#a8b8c8"/></g>
<g><rect x="765.9" y="341.9" width="25.3" height="15" fill="#2aa6ee"/><rect x="765.9" y="356.9" width="25.3" height="11.3" fill="url(#slat)"/><rect x="765.9" y="341.9" width="25.3" height="26.3" fill="none" stroke="#1a78c0" stroke-width="0.6"/><ellipse cx="778.4" cy="348.1" rx="7.4" ry="6.2" fill="#1668a8"/><ellipse cx="778.4" cy="347.5" rx="6.4" ry="5.2" fill="#1f86c6"/><ellipse cx="780.35" cy="345.85" rx="2.6" ry="1.1" fill="#c8f028" transform="rotate(-35 780.35 345.85)"/><ellipse cx="776.45" cy="345.85" rx="2.6" ry="1.1" fill="#c8f028" transform="rotate(35 776.45 345.85)"/><ellipse cx="780.35" cy="349.15" rx="2.6" ry="1.1" fill="#c8f028" transform="rotate(35 780.35 349.15)"/><ellipse cx="776.45" cy="349.15" rx="2.6" ry="1.1" fill="#c8f028" transform="rotate(-35 776.45 349.15)"/><circle cx="778.4" cy="347.5" r="1" fill="#2a90d0"/><path d="M766.1999999999999 368.2 V371.9 M774.9 368.2 V370.9 M790.9 368.2 V371.9" stroke="#b8c0c8" stroke-width="0.9"/><rect x="765.9" y="367.9" width="25.3" height="0.9" fill="#a8b8c8"/></g>
<g><rect x="922.5" y="341.4" width="25.3" height="15" fill="#2aa6ee"/><rect x="922.5" y="356.4" width="25.3" height="11.3" fill="url(#slat)"/><rect x="922.5" y="341.4" width="25.3" height="26.3" fill="none" stroke="#1a78c0" stroke-width="0.6"/><ellipse cx="935.0" cy="347.6" rx="7.4" ry="6.2" fill="#1668a8"/><ellipse cx="935.0" cy="347.0" rx="6.4" ry="5.2" fill="#1f86c6"/><ellipse cx="936.95" cy="345.35" rx="2.6" ry="1.1" fill="#c8f028" transform="rotate(-35 936.95 345.35)"/><ellipse cx="933.05" cy="345.35" rx="2.6" ry="1.1" fill="#c8f028" transform="rotate(35 933.05 345.35)"/><ellipse cx="936.95" cy="348.65" rx="2.6" ry="1.1" fill="#c8f028" transform="rotate(35 936.95 348.65)"/><ellipse cx="933.05" cy="348.65" rx="2.6" ry="1.1" fill="#c8f028" transform="rotate(-35 933.05 348.65)"/><circle cx="935.0" cy="347.0" r="1" fill="#2a90d0"/><path d="M922.8 367.7 V371.4 M931.5 367.7 V370.4 M947.5 367.7 V371.4" stroke="#b8c0c8" stroke-width="0.9"/><rect x="922.5" y="367.4" width="25.3" height="0.9" fill="#a8b8c8"/></g>
<g><rect x="976.2" y="342.7" width="25.3" height="15" fill="#2aa6ee"/><rect x="976.2" y="357.7" width="25.3" height="11.3" fill="url(#slat)"/><rect x="976.2" y="342.7" width="25.3" height="26.3" fill="none" stroke="#1a78c0" stroke-width="0.6"/><ellipse cx="988.7" cy="348.90000000000003" rx="7.4" ry="6.2" fill="#1668a8"/><ellipse cx="988.7" cy="348.3" rx="6.4" ry="5.2" fill="#1f86c6"/><ellipse cx="990.65" cy="346.65" rx="2.6" ry="1.1" fill="#c8f028" transform="rotate(-35 990.65 346.65)"/><ellipse cx="986.75" cy="346.65" rx="2.6" ry="1.1" fill="#c8f028" transform="rotate(35 986.75 346.65)"/><ellipse cx="990.65" cy="349.95" rx="2.6" ry="1.1" fill="#c8f028" transform="rotate(35 990.65 349.95)"/><ellipse cx="986.75" cy="349.95" rx="2.6" ry="1.1" fill="#c8f028" transform="rotate(-35 986.75 349.95)"/><circle cx="988.7" cy="348.3" r="1" fill="#2a90d0"/><path d="M976.5 369.0 V372.7 M985.2 369.0 V371.7 M1001.2 369.0 V372.7" stroke="#b8c0c8" stroke-width="0.9"/><rect x="976.2" y="368.7" width="25.3" height="0.9" fill="#a8b8c8"/></g>
<g><rect x="1129.4" y="342.9" width="25.3" height="15" fill="#2aa6ee"/><rect x="1129.4" y="357.9" width="25.3" height="11.3" fill="url(#slat)"/><rect x="1129.4" y="342.9" width="25.3" height="26.3" fill="none" stroke="#1a78c0" stroke-width="0.6"/><ellipse cx="1141.9" cy="349.1" rx="7.4" ry="6.2" fill="#1668a8"/><ellipse cx="1141.9" cy="348.5" rx="6.4" ry="5.2" fill="#1f86c6"/><ellipse cx="1143.85" cy="346.85" rx="2.6" ry="1.1" fill="#c8f028" transform="rotate(-35 1143.85 346.85)"/><ellipse cx="1139.95" cy="346.85" rx="2.6" ry="1.1" fill="#c8f028" transform="rotate(35 1139.95 346.85)"/><ellipse cx="1143.85" cy="350.15" rx="2.6" ry="1.1" fill="#c8f028" transform="rotate(35 1143.85 350.15)"/><ellipse cx="1139.95" cy="350.15" rx="2.6" ry="1.1" fill="#c8f028" transform="rotate(-35 1139.95 350.15)"/><circle cx="1141.9" cy="348.5" r="1" fill="#2a90d0"/><path d="M1129.7 369.2 V372.9 M1138.4 369.2 V371.9 M1154.4 369.2 V372.9" stroke="#b8c0c8" stroke-width="0.9"/><rect x="1129.4" y="368.9" width="25.3" height="0.9" fill="#a8b8c8"/></g>
<g><rect x="1182.8" y="344.8" width="25.3" height="15" fill="#2aa6ee"/><rect x="1182.8" y="359.8" width="25.3" height="11.3" fill="url(#slat)"/><rect x="1182.8" y="344.8" width="25.3" height="26.3" fill="none" stroke="#1a78c0" stroke-width="0.6"/><ellipse cx="1195.3" cy="351.00000000000006" rx="7.4" ry="6.2" fill="#1668a8"/><ellipse cx="1195.3" cy="350.40000000000003" rx="6.4" ry="5.2" fill="#1f86c6"/><ellipse cx="1197.25" cy="348.75" rx="2.6" ry="1.1" fill="#c8f028" transform="rotate(-35 1197.25 348.75)"/><ellipse cx="1193.35" cy="348.75" rx="2.6" ry="1.1" fill="#c8f028" transform="rotate(35 1193.35 348.75)"/><ellipse cx="1197.25" cy="352.05" rx="2.6" ry="1.1" fill="#c8f028" transform="rotate(35 1197.25 352.05)"/><ellipse cx="1193.35" cy="352.05" rx="2.6" ry="1.1" fill="#c8f028" transform="rotate(-35 1193.35 352.05)"/><circle cx="1195.3" cy="350.40000000000003" r="1" fill="#2a90d0"/><path d="M1183.1 371.1 V374.8 M1191.8 371.1 V373.8 M1207.8 371.1 V374.8" stroke="#b8c0c8" stroke-width="0.9"/><rect x="1182.8" y="370.8" width="25.3" height="0.9" fill="#a8b8c8"/></g>
<g><rect x="670.8" y="430.7" width="40.8" height="2.8" fill="#5e5e72"/><rect x="673.3" y="428.0" width="37.4" height="2.9" fill="#b08a1e"/><rect x="665.5" y="409.09999999999997" width="8" height="3" rx="1.2" fill="#22b4cc"/><rect x="667.5" y="411.4" width="4" height="3" fill="#1898b0"/><ellipse cx="669.65" cy="420.7" rx="6" ry="8.3" fill="url(#pmp)"/><rect x="675" y="416.4" width="12" height="12" fill="url(#pmp)"/><rect x="676.5" y="418.4" width="9" height="6" fill="#1490a8"/><rect x="687" y="419.7" width="8" height="2.4" fill="#1aa0b8"/><circle cx="689.7" cy="420.79999999999995" r="2.4" fill="#26b8d0"/><rect x="694.6" y="414.0" width="22.4" height="15" rx="4" fill="url(#pmp)"/><rect x="712" y="414.4" width="5" height="14" rx="2" fill="#1aa6c0"/><rect x="702.4" y="411.79999999999995" width="4" height="2.6" fill="#22b4cc"/><rect x="700" y="421.4" width="10" height="7" rx="1.5" fill="#1692aa"/></g>
<g><rect x="801.5" y="430.3" width="40.8" height="2.8" fill="#5e5e72"/><rect x="804.0" y="427.6" width="37.4" height="2.9" fill="#b08a1e"/><rect x="796.2" y="408.7" width="8" height="3" rx="1.2" fill="#22b4cc"/><rect x="798.2" y="411" width="4" height="3" fill="#1898b0"/><ellipse cx="800.35" cy="420.3" rx="6" ry="8.3" fill="url(#pmp)"/><rect x="805.7" y="416" width="12" height="12" fill="url(#pmp)"/><rect x="807.2" y="418" width="9" height="6" fill="#1490a8"/><rect x="817.7" y="419.3" width="8" height="2.4" fill="#1aa0b8"/><circle cx="820.4000000000001" cy="420.4" r="2.4" fill="#26b8d0"/><rect x="825.3000000000001" y="413.6" width="22.4" height="15" rx="4" fill="url(#pmp)"/><rect x="842.7" y="414" width="5" height="14" rx="2" fill="#1aa6c0"/><rect x="833.1" y="411.4" width="4" height="2.6" fill="#22b4cc"/><rect x="830.7" y="421" width="10" height="7" rx="1.5" fill="#1692aa"/></g>
<g><rect x="930.8" y="430.8" width="40.8" height="2.8" fill="#5e5e72"/><rect x="933.3" y="428.1" width="37.4" height="2.9" fill="#b08a1e"/><rect x="925.5" y="409.2" width="8" height="3" rx="1.2" fill="#22b4cc"/><rect x="927.5" y="411.5" width="4" height="3" fill="#1898b0"/><ellipse cx="929.65" cy="420.8" rx="6" ry="8.3" fill="url(#pmp)"/><rect x="935" y="416.5" width="12" height="12" fill="url(#pmp)"/><rect x="936.5" y="418.5" width="9" height="6" fill="#1490a8"/><rect x="947" y="419.8" width="8" height="2.4" fill="#1aa0b8"/><circle cx="949.7" cy="420.9" r="2.4" fill="#26b8d0"/><rect x="954.6" y="414.1" width="22.4" height="15" rx="4" fill="url(#pmp)"/><rect x="972" y="414.5" width="5" height="14" rx="2" fill="#1aa6c0"/><rect x="962.4" y="411.9" width="4" height="2.6" fill="#22b4cc"/><rect x="960" y="421.5" width="10" height="7" rx="1.5" fill="#1692aa"/></g>
<g><rect x="1062.1" y="430.8" width="40.8" height="2.8" fill="#5e5e72"/><rect x="1064.6" y="428.1" width="37.4" height="2.9" fill="#b08a1e"/><rect x="1056.8" y="409.2" width="8" height="3" rx="1.2" fill="#22b4cc"/><rect x="1058.8" y="411.5" width="4" height="3" fill="#1898b0"/><ellipse cx="1060.95" cy="420.8" rx="6" ry="8.3" fill="url(#pmp)"/><rect x="1066.3" y="416.5" width="12" height="12" fill="url(#pmp)"/><rect x="1067.8" y="418.5" width="9" height="6" fill="#1490a8"/><rect x="1078.3" y="419.8" width="8" height="2.4" fill="#1aa0b8"/><circle cx="1081.0" cy="420.9" r="2.4" fill="#26b8d0"/><rect x="1085.8999999999999" y="414.1" width="22.4" height="15" rx="4" fill="url(#pmp)"/><rect x="1103.3" y="414.5" width="5" height="14" rx="2" fill="#1aa6c0"/><rect x="1093.7" y="411.9" width="4" height="2.6" fill="#22b4cc"/><rect x="1091.3" y="421.5" width="10" height="7" rx="1.5" fill="#1692aa"/></g>
<g><rect x="628.5" y="640.3" width="40.8" height="2.8" fill="#5e5e72"/><rect x="631.0" y="637.6" width="37.4" height="2.9" fill="#b08a1e"/><rect x="623.2" y="618.7" width="8" height="3" rx="1.2" fill="#22b4cc"/><rect x="625.2" y="621" width="4" height="3" fill="#1898b0"/><ellipse cx="627.35" cy="630.3" rx="6" ry="8.3" fill="url(#pmp)"/><rect x="632.7" y="626" width="12" height="12" fill="url(#pmp)"/><rect x="634.2" y="628" width="9" height="6" fill="#1490a8"/><rect x="644.7" y="629.3" width="8" height="2.4" fill="#1aa0b8"/><circle cx="647.4000000000001" cy="630.4" r="2.4" fill="#26b8d0"/><rect x="652.3000000000001" y="623.6" width="22.4" height="15" rx="4" fill="url(#pmp)"/><rect x="669.7" y="624" width="5" height="14" rx="2" fill="#1aa6c0"/><rect x="660.1" y="621.4" width="4" height="2.6" fill="#22b4cc"/><rect x="657.7" y="631" width="10" height="7" rx="1.5" fill="#1692aa"/></g>
<g><rect x="774.8" y="642.6999999999999" width="40.8" height="2.8" fill="#5e5e72"/><rect x="777.3" y="640.0" width="37.4" height="2.9" fill="#b08a1e"/><rect x="769.5" y="621.1" width="8" height="3" rx="1.2" fill="#22b4cc"/><rect x="771.5" y="623.4" width="4" height="3" fill="#1898b0"/><ellipse cx="773.65" cy="632.6999999999999" rx="6" ry="8.3" fill="url(#pmp)"/><rect x="779" y="628.4" width="12" height="12" fill="url(#pmp)"/><rect x="780.5" y="630.4" width="9" height="6" fill="#1490a8"/><rect x="791" y="631.6999999999999" width="8" height="2.4" fill="#1aa0b8"/><circle cx="793.7" cy="632.8" r="2.4" fill="#26b8d0"/><rect x="798.6" y="626.0" width="22.4" height="15" rx="4" fill="url(#pmp)"/><rect x="816" y="626.4" width="5" height="14" rx="2" fill="#1aa6c0"/><rect x="806.4" y="623.8" width="4" height="2.6" fill="#22b4cc"/><rect x="804" y="633.4" width="10" height="7" rx="1.5" fill="#1692aa"/></g>
<g><rect x="921.4" y="642.8" width="40.8" height="2.8" fill="#5e5e72"/><rect x="923.9" y="640.1" width="37.4" height="2.9" fill="#b08a1e"/><rect x="916.1" y="621.2" width="8" height="3" rx="1.2" fill="#22b4cc"/><rect x="918.1" y="623.5" width="4" height="3" fill="#1898b0"/><ellipse cx="920.25" cy="632.8" rx="6" ry="8.3" fill="url(#pmp)"/><rect x="925.6" y="628.5" width="12" height="12" fill="url(#pmp)"/><rect x="927.1" y="630.5" width="9" height="6" fill="#1490a8"/><rect x="937.6" y="631.8" width="8" height="2.4" fill="#1aa0b8"/><circle cx="940.3000000000001" cy="632.9" r="2.4" fill="#26b8d0"/><rect x="945.2" y="626.1" width="22.4" height="15" rx="4" fill="url(#pmp)"/><rect x="962.6" y="626.5" width="5" height="14" rx="2" fill="#1aa6c0"/><rect x="953.0" y="623.9" width="4" height="2.6" fill="#22b4cc"/><rect x="950.6" y="633.5" width="10" height="7" rx="1.5" fill="#1692aa"/></g>
<g><rect x="1064.8" y="643.3" width="40.8" height="2.8" fill="#5e5e72"/><rect x="1067.3" y="640.6" width="37.4" height="2.9" fill="#b08a1e"/><rect x="1059.5" y="621.7" width="8" height="3" rx="1.2" fill="#22b4cc"/><rect x="1061.5" y="624" width="4" height="3" fill="#1898b0"/><ellipse cx="1063.65" cy="633.3" rx="6" ry="8.3" fill="url(#pmp)"/><rect x="1069" y="629" width="12" height="12" fill="url(#pmp)"/><rect x="1070.5" y="631" width="9" height="6" fill="#1490a8"/><rect x="1081" y="632.3" width="8" height="2.4" fill="#1aa0b8"/><circle cx="1083.7" cy="633.4" r="2.4" fill="#26b8d0"/><rect x="1088.6" y="626.6" width="22.4" height="15" rx="4" fill="url(#pmp)"/><rect x="1106" y="627" width="5" height="14" rx="2" fill="#1aa6c0"/><rect x="1096.4" y="624.4" width="4" height="2.6" fill="#22b4cc"/><rect x="1094" y="634" width="10" height="7" rx="1.5" fill="#1692aa"/></g>
<g><path d="M662.5 500.3 L666.5 498 H676.5 L678.5 496.6 H689.5 Q691.8 496.6 691.8 500.3 Q691.8 504 689.5 504 H678.5 L676.5 502.6 H666.5 Z" fill="url(#chl)"/><path d="M699.8 501 Q699.8 497.3 702.5 497.3 H714.5 L718.5 498.5 H729.2 V503.5 H718.5 L714.5 505 H702.5 Q699.8 505 699.8 501 Z" fill="url(#chl)"/><rect x="719.1" y="495" width="5.8" height="3" rx="1" fill="#dce6b8"/><rect x="666.5" y="505" width="12.3" height="5" fill="#4a3c38"/><rect x="712.1" y="505" width="12.4" height="5" fill="#4a3c38"/><rect x="656.1" y="505" width="78.1" height="16" rx="3" fill="url(#chl)"/><rect x="666.5" y="505" width="12.3" height="4" fill="#4a3c38"/><rect x="712.1" y="505" width="12.4" height="4" fill="#4a3c38"/><rect x="657.1" y="521.5" width="74.1" height="11.8" rx="3" fill="url(#chl)"/><rect x="656.1" y="506" width="4" height="14" rx="1.5" fill="#e2ecc6"/><rect x="730.2" y="506" width="4" height="14" rx="1.5" fill="#c8d6a4"/><rect x="675.5" y="517.3" width="37.7" height="16" fill="#8c8c92"/><rect x="675.5" y="517.3" width="37.7" height="4.5" fill="#4e403c"/><path d="M686.5 521.8 V533.3 M699.5 521.8 V533.3" stroke="#6a6a70" stroke-width="0.8"/><path d="M670.5 533.3 V539 M699.5 533.3 V538 M722.5 533.3 V539" stroke="#4a3a30" stroke-width="1.2"/></g>
<g><path d="M883.9 501.0 L887.9 498.7 H897.9 L899.9 497.3 H910.9 Q913.1999999999999 497.3 913.1999999999999 501.0 Q913.1999999999999 504.7 910.9 504.7 H899.9 L897.9 503.3 H887.9 Z" fill="url(#chl)"/><path d="M921.1999999999999 501.7 Q921.1999999999999 498.0 923.9 498.0 H935.9 L939.9 499.2 H950.6 V504.2 H939.9 L935.9 505.7 H923.9 Q921.1999999999999 505.7 921.1999999999999 501.7 Z" fill="url(#chl)"/><rect x="940.5" y="495.7" width="5.8" height="3" rx="1" fill="#dce6b8"/><rect x="887.9" y="505.7" width="12.3" height="5" fill="#4a3c38"/><rect x="933.5" y="505.7" width="12.4" height="5" fill="#4a3c38"/><rect x="877.5" y="505.7" width="78.1" height="16" rx="3" fill="url(#chl)"/><rect x="887.9" y="505.7" width="12.3" height="4" fill="#4a3c38"/><rect x="933.5" y="505.7" width="12.4" height="4" fill="#4a3c38"/><rect x="878.5" y="522.2" width="74.1" height="11.8" rx="3" fill="url(#chl)"/><rect x="877.5" y="506.7" width="4" height="14" rx="1.5" fill="#e2ecc6"/><rect x="951.6" y="506.7" width="4" height="14" rx="1.5" fill="#c8d6a4"/><rect x="896.9" y="518.0" width="37.7" height="16" fill="#8c8c92"/><rect x="896.9" y="518.0" width="37.7" height="4.5" fill="#4e403c"/><path d="M907.9 522.5 V534.0 M920.9 522.5 V534.0" stroke="#6a6a70" stroke-width="0.8"/><path d="M891.9 534.0 V539.7 M920.9 534.0 V538.7 M943.9 534.0 V539.7" stroke="#4a3a30" stroke-width="1.2"/></g>
<g><path d="M1104.4 503.0 L1108.4 500.7 H1118.4 L1120.4 499.3 H1131.4 Q1133.7 499.3 1133.7 503.0 Q1133.7 506.7 1131.4 506.7 H1120.4 L1118.4 505.3 H1108.4 Z" fill="url(#chl)"/><path d="M1141.7 503.7 Q1141.7 500.0 1144.4 500.0 H1156.4 L1160.4 501.2 H1171.1000000000001 V506.2 H1160.4 L1156.4 507.7 H1144.4 Q1141.7 507.7 1141.7 503.7 Z" fill="url(#chl)"/><rect x="1161.0" y="497.7" width="5.8" height="3" rx="1" fill="#dce6b8"/><rect x="1108.4" y="507.7" width="12.3" height="5" fill="#4a3c38"/><rect x="1154.0" y="507.7" width="12.4" height="5" fill="#4a3c38"/><rect x="1098.0" y="507.7" width="78.1" height="16" rx="3" fill="url(#chl)"/><rect x="1108.4" y="507.7" width="12.3" height="4" fill="#4a3c38"/><rect x="1154.0" y="507.7" width="12.4" height="4" fill="#4a3c38"/><rect x="1099.0" y="524.2" width="74.1" height="11.8" rx="3" fill="url(#chl)"/><rect x="1098.0" y="508.7" width="4" height="14" rx="1.5" fill="#e2ecc6"/><rect x="1172.1000000000001" y="508.7" width="4" height="14" rx="1.5" fill="#c8d6a4"/><rect x="1117.4" y="520.0" width="37.7" height="16" fill="#8c8c92"/><rect x="1117.4" y="520.0" width="37.7" height="4.5" fill="#4e403c"/><path d="M1128.4 524.5 V536.0 M1141.4 524.5 V536.0" stroke="#6a6a70" stroke-width="0.8"/><path d="M1112.4 536.0 V541.7 M1141.4 536.0 V540.7 M1164.4 536.0 V541.7" stroke="#4a3a30" stroke-width="1.2"/></g>
<g opacity="0.85"><rect x="755.9" y="334.8" width="12" height="7" rx="2" fill="#157486"/><circle cx="760.9" cy="338.3" r="4.6" fill="#1b8a9c" stroke="#3cc4d4" stroke-width="1"/><circle cx="760.9" cy="338.3" r="2" fill="none" stroke="#5ad8e4" stroke-width="0.8"/><rect x="765.9" y="334.8" width="1.6" height="7" fill="#3cc4d4"/></g>
<g opacity="0.85"><rect x="743.5" y="381.8" width="12" height="7" rx="2" fill="#157486"/><circle cx="748.5" cy="385.3" r="4.6" fill="#1b8a9c" stroke="#3cc4d4" stroke-width="1"/><circle cx="748.5" cy="385.3" r="2" fill="none" stroke="#5ad8e4" stroke-width="0.8"/><rect x="753.5" y="381.8" width="1.6" height="7" fill="#3cc4d4"/></g>
<g opacity="0.85"><rect x="960.9" y="336.1" width="12" height="7" rx="2" fill="#157486"/><circle cx="965.9" cy="339.6" r="4.6" fill="#1b8a9c" stroke="#3cc4d4" stroke-width="1"/><circle cx="965.9" cy="339.6" r="2" fill="none" stroke="#5ad8e4" stroke-width="0.8"/><rect x="970.9" y="336.1" width="1.6" height="7" fill="#3cc4d4"/></g>
<g opacity="0.85"><rect x="957.3" y="381.8" width="12" height="7" rx="2" fill="#157486"/><circle cx="962.3" cy="385.3" r="4.6" fill="#1b8a9c" stroke="#3cc4d4" stroke-width="1"/><circle cx="962.3" cy="385.3" r="2" fill="none" stroke="#5ad8e4" stroke-width="0.8"/><rect x="967.3" y="381.8" width="1.6" height="7" fill="#3cc4d4"/></g>
<g opacity="0.85"><rect x="1166" y="334.0" width="12" height="7" rx="2" fill="#157486"/><circle cx="1171" cy="337.5" r="4.6" fill="#1b8a9c" stroke="#3cc4d4" stroke-width="1"/><circle cx="1171" cy="337.5" r="2" fill="none" stroke="#5ad8e4" stroke-width="0.8"/><rect x="1176" y="334.0" width="1.6" height="7" fill="#3cc4d4"/></g>
<g opacity="0.85"><rect x="1170" y="381.6" width="12" height="7" rx="2" fill="#157486"/><circle cx="1175" cy="385.1" r="4.6" fill="#1b8a9c" stroke="#3cc4d4" stroke-width="1"/><circle cx="1175" cy="385.1" r="2" fill="none" stroke="#5ad8e4" stroke-width="0.8"/><rect x="1180" y="381.6" width="1.6" height="7" fill="#3cc4d4"/></g>
<g opacity="0.85"><rect x="712.6" y="480.6" width="12" height="7" rx="2" fill="#157486"/><circle cx="717.6" cy="484.1" r="4.6" fill="#1b8a9c" stroke="#3cc4d4" stroke-width="1"/><circle cx="717.6" cy="484.1" r="2" fill="none" stroke="#5ad8e4" stroke-width="0.8"/><rect x="722.6" y="480.6" width="1.6" height="7" fill="#3cc4d4"/></g>
<g opacity="0.85"><rect x="702" y="540.8" width="12" height="7" rx="2" fill="#157486"/><circle cx="707" cy="544.3" r="4.6" fill="#1b8a9c" stroke="#3cc4d4" stroke-width="1"/><circle cx="707" cy="544.3" r="2" fill="none" stroke="#5ad8e4" stroke-width="0.8"/><rect x="712" y="540.8" width="1.6" height="7" fill="#3cc4d4"/></g>
<g opacity="0.85"><rect x="928.8" y="484.9" width="12" height="7" rx="2" fill="#157486"/><circle cx="933.8" cy="488.4" r="4.6" fill="#1b8a9c" stroke="#3cc4d4" stroke-width="1"/><circle cx="933.8" cy="488.4" r="2" fill="none" stroke="#5ad8e4" stroke-width="0.8"/><rect x="938.8" y="484.9" width="1.6" height="7" fill="#3cc4d4"/></g>
<g opacity="0.85"><rect x="925.8" y="541.2" width="12" height="7" rx="2" fill="#157486"/><circle cx="930.8" cy="544.7" r="4.6" fill="#1b8a9c" stroke="#3cc4d4" stroke-width="1"/><circle cx="930.8" cy="544.7" r="2" fill="none" stroke="#5ad8e4" stroke-width="0.8"/><rect x="935.8" y="541.2" width="1.6" height="7" fill="#3cc4d4"/></g>
<g opacity="0.85"><rect x="1144.9" y="482.2" width="12" height="7" rx="2" fill="#157486"/><circle cx="1149.9" cy="485.7" r="4.6" fill="#1b8a9c" stroke="#3cc4d4" stroke-width="1"/><circle cx="1149.9" cy="485.7" r="2" fill="none" stroke="#5ad8e4" stroke-width="0.8"/><rect x="1154.9" y="482.2" width="1.6" height="7" fill="#3cc4d4"/></g>
<g opacity="0.85"><rect x="1147.8" y="540.8" width="12" height="7" rx="2" fill="#157486"/><circle cx="1152.8" cy="544.3" r="4.6" fill="#1b8a9c" stroke="#3cc4d4" stroke-width="1"/><circle cx="1152.8" cy="544.3" r="2" fill="none" stroke="#5ad8e4" stroke-width="0.8"/><rect x="1157.8" y="540.8" width="1.6" height="7" fill="#3cc4d4"/></g>
<g><rect x="1302" y="600" width="120" height="25" rx="6" fill="url(#cyl)"/>
<circle cx="1313" cy="601" r="2.8" fill="#2a2020"/><rect x="1321" y="597" width="1.4" height="5" fill="#c02020"/><circle cx="1335" cy="600.5" r="4.5" fill="#9a9a9a" stroke="#555" stroke-width="1"/>
<rect x="1346.0" y="599" width="4" height="3" fill="#6a6a6a"/>
<rect x="1356.5" y="599" width="4" height="3" fill="#6a6a6a"/>
<rect x="1367.0" y="599" width="4" height="3" fill="#6a6a6a"/>
<rect x="1377.5" y="599" width="4" height="3" fill="#6a6a6a"/>
<rect x="1388.0" y="599" width="4" height="3" fill="#6a6a6a"/>
<rect x="1398.5" y="599" width="4" height="3" fill="#6a6a6a"/>
<rect x="1409.0" y="599" width="4" height="3" fill="#6a6a6a"/>
</g>
<g><rect x="1480.6" y="595" width="110" height="26" rx="6" fill="url(#cyl)"/>
<circle cx="1491.6" cy="596" r="2.8" fill="#2a2020"/><rect x="1499.6" y="592" width="1.4" height="5" fill="#c02020"/><circle cx="1513.6" cy="595.5" r="4.5" fill="#9a9a9a" stroke="#555" stroke-width="1"/>
<rect x="1524.6" y="594" width="4" height="3" fill="#6a6a6a"/>
<rect x="1535.1" y="594" width="4" height="3" fill="#6a6a6a"/>
<rect x="1545.6" y="594" width="4" height="3" fill="#6a6a6a"/>
<rect x="1556.1" y="594" width="4" height="3" fill="#6a6a6a"/>
<rect x="1566.6" y="594" width="4" height="3" fill="#6a6a6a"/>
<rect x="1577.1" y="594" width="4" height="3" fill="#6a6a6a"/>
</g>
<rect x="1321" y="625" width="12" height="18" fill="#2e2422"/><rect x="1323" y="627" width="8" height="8" fill="#4a3a36"/>
<rect x="1395" y="625" width="12" height="18" fill="#2e2422"/><rect x="1397" y="627" width="8" height="8" fill="#4a3a36"/>
<rect x="1498" y="621" width="12" height="18" fill="#2e2422"/><rect x="1500" y="623" width="8" height="8" fill="#4a3a36"/>
<rect x="1570" y="621" width="12" height="18" fill="#2e2422"/><rect x="1572" y="623" width="8" height="8" fill="#4a3a36"/>
<circle cx="600.8" cy="396.8" r="8.2" fill="none" stroke="#24a8b8" stroke-width="1" stroke-dasharray="2.5 1"/><circle cx="600.8" cy="396.8" r="5.8" fill="#44eef6"/>
<circle cx="1206" cy="411" r="8.2" fill="none" stroke="#24a8b8" stroke-width="1" stroke-dasharray="2.5 1"/><circle cx="1206" cy="411" r="5.8" fill="#44eef6"/>
<circle cx="1416.7" cy="565" r="8.2" fill="none" stroke="#24a8b8" stroke-width="1" stroke-dasharray="2.5 1"/><circle cx="1416.7" cy="565" r="5.8" fill="#44eef6"/>
<circle cx="1121.8" cy="675" r="8.2" fill="none" stroke="#24a8b8" stroke-width="1" stroke-dasharray="2.5 1"/><circle cx="1121.8" cy="675" r="5.8" fill="#44eef6"/>
<rect x="1292.5" y="582" width="9" height="3.5" fill="#1ab8e8"/>
<rect x="1175.2" y="694" width="9" height="3.5" fill="#1ab8e8"/>
<rect x="1335.5" y="671" width="3.5" height="9.5" fill="#1ab8e8"/>
<rect x="1363" y="669.5" width="3.5" height="9" fill="#1ab8e8"/>
<rect x="1387" y="667" width="3.5" height="10" fill="#1ab8e8"/>
<rect x="1412.5" y="665" width="3.5" height="10" fill="#1ab8e8"/>
<rect x="1504" y="675" width="3.5" height="10" fill="#1ab8e8"/>
<rect x="1529" y="673" width="3.5" height="10" fill="#1ab8e8"/>
<rect x="1555" y="670" width="3.5" height="10" fill="#1ab8e8"/>
<rect x="1579" y="668" width="3.5" height="10" fill="#1ab8e8"/>
<text x="540" y="374.1" font-size="8.4" font-weight="bold" fill="#e4e4e4">冷冻总管进水</text>
<text x="643.7" y="348.40000000000003" font-size="8.4" font-weight="bold" fill="#e4e4e4">运行状态</text>
<text x="644.0" y="364.90000000000003" font-size="8.4" font-weight="bold" fill="#e4e4e4">频率：4 Hz</text>
<rect x="701.8" y="344.7" width="5.5" height="1.3" fill="#d8d8d8"/>
<text x="794.8" y="348.40000000000003" font-size="8.4" font-weight="bold" fill="#e4e4e4">运行状态</text>
<text x="795.0999999999999" y="364.90000000000003" font-size="8.4" font-weight="bold" fill="#e4e4e4">频率：4 Hz</text>
<rect x="852" y="344.7" width="5.5" height="1.3" fill="#d8d8d8"/>
<text x="872" y="348.1" font-size="8.4" font-weight="bold" fill="#e4e4e4">运行状态</text>
<text x="872.3" y="364.6" font-size="8.4" font-weight="bold" fill="#e4e4e4">频率：4 Hz</text>
<text x="1005.5" y="347.6" font-size="8.4" font-weight="bold" fill="#e4e4e4">运行状态</text>
<text x="1005.8" y="364.1" font-size="8.4" font-weight="bold" fill="#e4e4e4">频率：4 Hz</text>
<rect x="1063.5" y="343.9" width="5.5" height="1.3" fill="#d8d8d8"/>
<text x="1078.8" y="348.1" font-size="8.4" font-weight="bold" fill="#e4e4e4">运行状态</text>
<text x="1079.1" y="364.6" font-size="8.4" font-weight="bold" fill="#e4e4e4">频率：4 Hz</text>
<text x="1215" y="348.1" font-size="8.4" font-weight="bold" fill="#e4e4e4">运行状态</text>
<text x="1215.3" y="364.6" font-size="8.4" font-weight="bold" fill="#e4e4e4">频率：4 Hz</text>
<rect x="1275.8" y="344.4" width="5.5" height="1.3" fill="#d8d8d8"/>
<text x="700" y="386.1" font-size="8.6" font-weight="bold" fill="#e4e4e4">CT11</text>
<text x="770.8" y="388.1" font-size="8.6" font-weight="bold" fill="#e4e4e4">CT12</text>
<text x="916.6" y="387.1" font-size="8.6" font-weight="bold" fill="#e4e4e4">CT21</text>
<text x="981" y="388.1" font-size="8.6" font-weight="bold" fill="#e4e4e4">CT22</text>
<text x="1127" y="387.1" font-size="8.6" font-weight="bold" fill="#e4e4e4">CT31</text>
<text x="1193" y="388.1" font-size="8.6" font-weight="bold" fill="#e4e4e4">CT32</text>
<text x="719" y="426.1" font-size="8.4" font-weight="bold" fill="#e4e4e4">运行状态</text>
<text x="719" y="440.1" font-size="8.4" font-weight="bold" fill="#e4e4e4">频率：4 Hz</text>
<rect x="778" y="422.4" width="5.5" height="1.3" fill="#d8d8d8"/>
<text x="850.3" y="423.1" font-size="8.4" font-weight="bold" fill="#e4e4e4">运行状态</text>
<text x="850.3" y="437.1" font-size="8.4" font-weight="bold" fill="#e4e4e4">频率：4 Hz</text>
<rect x="910" y="419.4" width="5.5" height="1.3" fill="#d8d8d8"/>
<text x="979.5" y="424.1" font-size="8.4" font-weight="bold" fill="#e4e4e4">运行状态</text>
<text x="979.5" y="438.1" font-size="8.4" font-weight="bold" fill="#e4e4e4">频率：4 Hz</text>
<rect x="1040" y="420.4" width="5.5" height="1.3" fill="#d8d8d8"/>
<text x="1111.6" y="424.1" font-size="8.4" font-weight="bold" fill="#e4e4e4">运行状态</text>
<text x="1111.6" y="438.1" font-size="8.4" font-weight="bold" fill="#e4e4e4">频率：4 Hz</text>
<rect x="1171.5" y="420.4" width="5.5" height="1.3" fill="#d8d8d8"/>
<text x="654.7" y="444.1" font-size="8.4" font-weight="bold" fill="#e4e4e4">CWP-1</text>
<text x="789.7" y="442.1" font-size="8.4" font-weight="bold" fill="#e4e4e4">CWP-2</text>
<text x="917.7" y="444.1" font-size="8.4" font-weight="bold" fill="#e4e4e4">CWP-3</text>
<text x="1050.8" y="444.1" font-size="8.4" font-weight="bold" fill="#e4e4e4">CWP-4</text>
<text x="1181.6" y="434.1" font-size="8.4" font-weight="bold" fill="#e4e4e4">冷冻总管出水</text>
<text x="586.5" y="499.1" font-size="8.4" font-weight="bold" fill="#e4e4e4">回水温度：1.5 ℃</text>
<text x="587.3" y="516.9" font-size="8.4" font-weight="bold" fill="#e4e4e4">出水温度：1.3 ℃</text>
<text x="587.3" y="532.5" font-size="8.4" font-weight="bold" fill="#e4e4e4">运行状态</text>
<rect x="645" y="528.8" width="5.5" height="1.3" fill="#d8d8d8"/>
<text x="586" y="549.1" font-size="8.4" font-weight="bold" fill="#e4e4e4">总有功功率：122333.68 kW</text>
<text x="799.8" y="499.1" font-size="8.4" font-weight="bold" fill="#e4e4e4">回水温度：1.3 ℃</text>
<text x="799.4" y="513.6" font-size="8.4" font-weight="bold" fill="#e4e4e4">出水温度：1.4 ℃</text>
<text x="800.4" y="529.3000000000001" font-size="8.4" font-weight="bold" fill="#e4e4e4">运行状态</text>
<rect x="858" y="525.6" width="5.5" height="1.3" fill="#d8d8d8"/>
<text x="794.8" y="545.1" font-size="8.4" font-weight="bold" fill="#e4e4e4">总有功功率：141335.79 kW</text>
<text x="1010.6" y="502.1" font-size="8.4" font-weight="bold" fill="#e4e4e4">回水温度：2.0 ℃</text>
<text x="1013" y="518.1" font-size="8.4" font-weight="bold" fill="#e4e4e4">出水温度：1.1 ℃</text>
<text x="1011.4" y="536.3000000000001" font-size="8.4" font-weight="bold" fill="#e4e4e4">运行状态</text>
<rect x="1068.7" y="532.6" width="5.5" height="1.3" fill="#d8d8d8"/>
<text x="1009.8" y="552.7" font-size="8.4" font-weight="bold" fill="#e4e4e4">总有功功率：142705.63 kW</text>
<text x="715.3" y="557.1" font-size="8.6" font-weight="bold" fill="#e4e4e4">CH-1</text>
<text x="937.5" y="557.8000000000001" font-size="8.6" font-weight="bold" fill="#e4e4e4">CH-2</text>
<text x="1160" y="557.1" font-size="8.6" font-weight="bold" fill="#e4e4e4">CH-3</text>
<text x="1380.4" y="539.1" font-size="8.4" font-weight="bold" fill="#e4e4e4">冷冻总管出水</text>
<text x="681" y="626.1" font-size="8.4" font-weight="bold" fill="#e4e4e4">运行状态</text>
<text x="681" y="642.1" font-size="8.4" font-weight="bold" fill="#e4e4e4">频率：4 Hz</text>
<rect x="737.8" y="622.4" width="5.5" height="1.3" fill="#d8d8d8"/>
<text x="827.5" y="623.5" font-size="8.4" font-weight="bold" fill="#e4e4e4">运行状态</text>
<text x="827.5" y="639.5" font-size="8.4" font-weight="bold" fill="#e4e4e4">频率：4 Hz</text>
<rect x="885.6" y="619.8" width="5.5" height="1.3" fill="#d8d8d8"/>
<text x="973" y="624.1" font-size="8.4" font-weight="bold" fill="#e4e4e4">运行状态</text>
<text x="973" y="640.1" font-size="8.4" font-weight="bold" fill="#e4e4e4">频率：4 Hz</text>
<rect x="1031" y="620.4" width="5.5" height="1.3" fill="#d8d8d8"/>
<text x="1118" y="628.1" font-size="8.4" font-weight="bold" fill="#e4e4e4">运行状态</text>
<text x="1118" y="644.1" font-size="8.4" font-weight="bold" fill="#e4e4e4">频率：4 Hz</text>
<rect x="1176.4" y="624.4" width="5.5" height="1.3" fill="#d8d8d8"/>
<text x="611.6" y="661.4" font-size="8.4" font-weight="bold" fill="#e4e4e4">CHWP-1</text>
<text x="755.5" y="663.4" font-size="8.4" font-weight="bold" fill="#e4e4e4">CHWP-2</text>
<text x="899.4" y="663.9" font-size="8.4" font-weight="bold" fill="#e4e4e4">CHWP-3</text>
<text x="1045.6" y="663.1" font-size="8.4" font-weight="bold" fill="#e4e4e4">CHWP-4</text>
<text x="1060" y="704.1" font-size="8.4" font-weight="bold" fill="#e4e4e4">冷冻总管进水</text>
<text x="1343.3" y="589.1" font-size="8.4" font-weight="bold" fill="#e4e4e4">集水缸</text>
<text x="1520" y="585.7" font-size="8.4" font-weight="bold" fill="#e4e4e4">分水缸</text>
</svg></body></html>
